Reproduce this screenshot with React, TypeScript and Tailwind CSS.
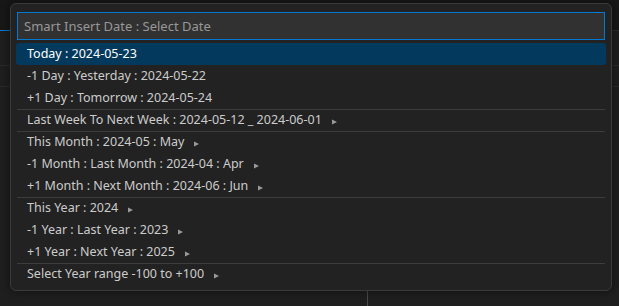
import React from "react";

type Item = { t: string; arrow?: boolean; sel?: boolean };

const groups: Item[][] = [
  [
    { t: "Today : 2024-05-23", sel: true },
    { t: "-1 Day : Yesterday : 2024-05-22" },
    { t: "+1 Day : Tomorrow : 2024-05-24" },
  ],
  [{ t: "Last Week To Next Week : 2024-05-12 _ 2024-06-01", arrow: true }],
  [
    { t: "This Month : 2024-05 : May", arrow: true },
    { t: "-1 Month : Last Month : 2024-04 : Apr", arrow: true },
    { t: "+1 Month : Next Month : 2024-06 : Jun", arrow: true },
  ],
  [
    { t: "This Year : 2024", arrow: true },
    { t: "-1 Year : Last Year : 2023", arrow: true },
    { t: "+1 Year : Next Year : 2025", arrow: true },
  ],
  [{ t: "Select Year range -100 to +100", arrow: true }],
];

function Arrow() {
  return (
    <svg width="5" height="6" viewBox="0 0 5 6" className="ml-[10px] mt-[3px] shrink-0">
      <path d="M0 0.5 L5 3 L0 5.5 Z" fill="#9a9a9a" />
    </svg>
  );
}

export default function App() {
  return (
    <div
      className="relative w-[619px] h-[306px] overflow-hidden bg-[#1f1f1f]"
      style={{ fontFamily: '"Noto Sans", "Open Sans", sans-serif' }}
    >
      {/* background editor chrome */}
      <div className="flex flex-col">
        <div className="h-[31px] bg-[#181818] border-b border-[#2b2b2b] flex items-end">
          <div className="w-[10px] h-px bg-[#0078d4] translate-y-px" />
        </div>
        <div className="h-[35px] border-b border-[#2b2b2b]" />
        <div className="h-[21px] border-b border-[#2b2b2b]" />
        <div className="h-[203px]" />
        <div className="flex h-[16px]">
          <div className="w-[367px]" />
          <div className="w-px bg-[#4a4a4a]" />
        </div>
      </div>

      {/* quick pick overlay */}
      <div className="absolute left-[10px] top-[3px] w-[602px] h-[288px] rounded-[6px] border border-[#3a3a3a] bg-[#222222] shadow-[0_0_8px_2px_rgba(0,0,0,0.36)] px-[5px] pt-[8px]">
        <div className="mx-px h-[28px] border border-[#0078d4] bg-[#313131] flex items-center px-[6px]">
          <span className="text-[13px] text-[#989898] leading-none">Smart Insert Date : Select Date</span>
        </div>
        <div className="mt-[3px] flex flex-col">
          {groups.map((g, gi) => (
            <div key={gi} className={gi > 0 ? "border-t border-[#3c3c3c] mx-px" : ""}>
              {g.map((it, ii) => (
                <div
                  key={ii}
                  className={
                    "flex items-center h-[22px] text-[12.5px] " +
                    (gi > 0 ? "px-[10px] " : "px-[11px] ") +
                    (it.sel ? "bg-[#04395e] text-white rounded-[3px]" : "text-[#cccccc]")
                  }
                  style={gi > 0 && ii === 0 ? { height: 21 } : undefined}
                >
                  <span className="whitespace-pre">{it.t}</span>
                  {it.arrow && <Arrow />}
                </div>
              ))}
            </div>
          ))}
        </div>
      </div>
    </div>
  );
}
